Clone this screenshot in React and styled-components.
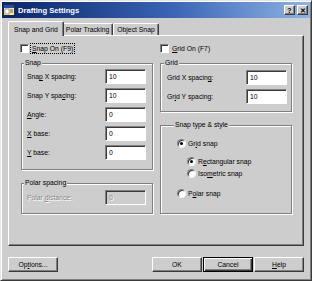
import React from 'react';
import styled, { createGlobalStyle } from 'styled-components';

const FACE = '#cdcdcd';
const FONT = '"Liberation Sans", Arial, sans-serif';

const GlobalStyle = createGlobalStyle`
  html, body { margin: 0; padding: 0; background: ${FACE}; }
  body { width: 312px; height: 281px; overflow: hidden; font-family: ${FONT}; }
  *, *::before, *::after { box-sizing: border-box; }
`;

const Window = styled.div`
  width: 312px;
  height: 281px;
  background: ${FACE};
  border: 1px solid;
  border-color: #e6e6e6 #3a3a3a #3a3a3a #e6e6e6;
  box-shadow: inset 1px 1px #fff, inset -1px -1px #808080;
  padding: 1px;
  display: flex;
  flex-direction: column;
  font-size: 6.8px;
  color: #000;
`;

const TitleBar = styled.div`
  height: 16px;
  display: flex;
  align-items: center;
  padding: 0 2px 0 1px;
  background: linear-gradient(to right, #0a246a 0%, #3a64b4 55%, #8fb3e4 100%);
`;

const TitleText = styled.span`
  margin-left: 3px;
  flex: 1;
  color: #fff;
  font-weight: bold;
  font-size: 7.6px;
  letter-spacing: 0;
`;

const CaptionButton = styled.div`
  width: 11px;
  height: 10px;
  margin-left: ${p => p.$gap || 0}px;
  background: ${FACE};
  border: 1px solid;
  border-color: #fff #3a3a3a #3a3a3a #fff;
  box-shadow: inset -1px -1px #808080;
  display: flex;
  align-items: center;
  justify-content: center;
  font-weight: bold;
  font-size: 7px;
  line-height: 1;
  color: #000;
`;

const Body = styled.div`
  flex: 1;
  display: flex;
  flex-direction: column;
  padding: 3px 6px 0 6px;
`;

const TabStrip = styled.div`
  display: flex;
  align-items: flex-end;
  height: 14px;
  padding-left: 2px;
  position: relative;
  z-index: 1;
`;

const Tab = styled.div`
  height: ${p => (p.$active ? 15 : 12)}px;
  margin: 0 ${p => (p.$active ? -2 : 0)}px ${p => (p.$active ? -1 : 0)}px;
  padding: 0 ${p => (p.$active ? 5 : 3)}px;
  display: flex;
  align-items: center;
  background: ${FACE};
  border-top: 1px solid #fff;
  border-left: 1px solid #fff;
  border-right: 1px solid #3a3a3a;
  border-radius: 2px 2px 0 0;
  box-shadow: inset -1px 0 #808080;
  white-space: nowrap;
  position: relative;
  z-index: ${p => (p.$active ? 2 : 0)};
`;

const Panel = styled.div`
  height: 211px;
  border: 1px solid;
  border-color: #fff #3a3a3a #3a3a3a #fff;
  box-shadow: inset -1px -1px #808080;
  padding: 7px 10px 0 11px;
  display: grid;
  grid-template-columns: 133px 132px;
  column-gap: 7px;
  align-items: start;
`;

const Column = styled.div`
  display: flex;
  flex-direction: column;
`;

const CheckRow = styled.div`
  display: flex;
  align-items: center;
  height: 10px;
  gap: 2px;
  white-space: nowrap;
`;

const CheckBox = styled.span`
  width: 9px;
  height: 9px;
  flex: none;
  background: #fff;
  border: 1px solid;
  border-color: #808080 #fff #fff #808080;
  box-shadow: inset 1px 1px #3a3a3a;
`;

const CheckLabel = styled.span`
  padding: 0 1px;
  outline: ${p => (p.$focus ? '1px dotted #000' : 'none')};
  line-height: 9px;
`;

const Group = styled.fieldset`
  margin: ${p => p.$mt}px 0 0 ${p => p.$ml || 0}px;
  padding: ${p => p.$pad};
  border: 1px solid #808080;
  box-shadow: 1px 1px 0 #fff, inset 1px 1px 0 #fff;
  min-width: 0;
  display: flex;
  flex-direction: column;
`;

const Legend = styled.legend`
  margin-left: -3px;
  padding: 0 1px;
  line-height: 8px;
  background: ${FACE};
`;

const FieldRow = styled.div`
  display: flex;
  align-items: center;
  justify-content: space-between;
  height: 15px;
  & + & { margin-top: 4px; }
`;

const FieldLabel = styled.span`
  color: ${p => (p.$disabled ? '#8a8a8a' : '#000')};
  text-shadow: ${p => (p.$disabled ? '1px 1px 0 #fff' : 'none')};
  white-space: nowrap;
`;

const TextInput = styled.div`
  width: 41px;
  height: 15px;
  background: ${p => (p.$disabled ? FACE : '#fff')};
  border: 1px solid;
  border-color: #808080 #fff #fff #808080;
  box-shadow: inset 1px 1px #3a3a3a;
  color: ${p => (p.$disabled ? '#8a8a8a' : '#000')};
  text-shadow: ${p => (p.$disabled ? '1px 1px 0 #fff' : 'none')};
  padding: 0 0 0 3px;
  display: flex;
  align-items: center;
`;

const RadioRow = styled.div`
  display: flex;
  align-items: center;
  gap: 2px;
  height: 10px;
  margin-top: ${p => p.$mt || 0}px;
  margin-left: ${p => p.$indent || 0}px;
  white-space: nowrap;
`;

const RadioCircle = styled.span`
  width: 9px;
  height: 9px;
  flex: none;
  border-radius: 50%;
  background: #fff;
  border: 1px solid;
  border-color: #808080 #f4f4f4 #f4f4f4 #808080;
  box-shadow: inset 1px 1px #3a3a3a;
  display: flex;
  align-items: center;
  justify-content: center;
  &::after {
    content: '';
    width: 3px;
    height: 3px;
    border-radius: 50%;
    background: ${p => (p.$on ? '#000' : 'transparent')};
  }
`;

const ButtonRow = styled.div`
  display: flex;
  margin-top: 11px;
  height: 15px;
`;

const Spacer = styled.div`
  flex: 1;
`;

const Button = styled.div`
  width: 50px;
  height: 15px;
  margin-left: ${p => p.$ml || 0}px;
  background: ${FACE};
  border: 1px solid;
  border-color: ${p => (p.$default ? '#000' : '#fff #3a3a3a #3a3a3a #fff')};
  box-shadow: ${p => (p.$default
    ? 'inset 1px 1px #fff, inset -1px -1px #3a3a3a, inset -2px -2px #808080'
    : 'inset -1px -1px #808080')};
  display: flex;
  align-items: center;
  justify-content: center;
  white-space: nowrap;
`;

const U = styled.span`
  text-decoration: underline;
  text-underline-offset: 1px;
`;

function AppIcon() {
  return (
    <svg width="12" height="12" viewBox="0 0 12 12">
      <rect x="0.5" y="0.5" width="11" height="11" fill="#f4e9b8" stroke="#2a2a2a" />
      <rect x="1" y="1" width="10" height="3" fill="#1f4fb4" />
      <rect x="2" y="5" width="4" height="5" fill="#fff" stroke="#6b6b6b" strokeWidth="0.6" />
      <line x1="7" y1="6" x2="10" y2="6" stroke="#c03a2a" strokeWidth="1" />
      <line x1="7" y1="8" x2="10" y2="8" stroke="#2d8a3a" strokeWidth="1" />
    </svg>
  );
}

export default function App() {
  return (
    <>
      <GlobalStyle />
      <Window>
        <TitleBar>
          <AppIcon />
          <TitleText>Drafting Settings</TitleText>
          <CaptionButton>?</CaptionButton>
          <CaptionButton $gap={2}>✕</CaptionButton>
        </TitleBar>
        <Body>
          <TabStrip>
            <Tab $active>Snap and Grid</Tab>
            <Tab>Polar Tracking</Tab>
            <Tab>Object Snap</Tab>
          </TabStrip>
          <Panel>
            <Column>
              <CheckRow>
                <CheckBox />
                <CheckLabel $focus><U>S</U>nap On (F9)</CheckLabel>
              </CheckRow>
              <Group $mt={6} $ml={1} $pad="2px 6px 9px 5px">
                <Legend>Snap</Legend>
                <FieldRow>
                  <FieldLabel>Sna<U>p</U> X spacing:</FieldLabel>
                  <TextInput>10</TextInput>
                </FieldRow>
                <FieldRow>
                  <FieldLabel>Snap Y spa<U>c</U>ing:</FieldLabel>
                  <TextInput>10</TextInput>
                </FieldRow>
                <FieldRow>
                  <FieldLabel><U>A</U>ngle:</FieldLabel>
                  <TextInput>0</TextInput>
                </FieldRow>
                <FieldRow>
                  <FieldLabel><U>X</U> base:</FieldLabel>
                  <TextInput>0</TextInput>
                </FieldRow>
                <FieldRow>
                  <FieldLabel><U>Y</U> base:</FieldLabel>
                  <TextInput>0</TextInput>
                </FieldRow>
              </Group>
              <Group $mt={9} $ml={1} $pad="3px 6px 8px 5px">
                <Legend>Polar spacing</Legend>
                <FieldRow>
                  <FieldLabel $disabled>Polar <U>d</U>istance:</FieldLabel>
                  <TextInput $disabled>0</TextInput>
                </FieldRow>
              </Group>
            </Column>
            <Column>
              <CheckRow>
                <CheckBox />
                <CheckLabel><U>G</U>rid On (F7)</CheckLabel>
              </CheckRow>
              <Group $mt={6} $pad="3px 4px 7px 6px">
                <Legend>Grid</Legend>
                <FieldRow>
                  <FieldLabel>Grid X spacin<U>g</U>:</FieldLabel>
                  <TextInput>10</TextInput>
                </FieldRow>
                <FieldRow>
                  <FieldLabel>Gr<U>i</U>d Y spacing:</FieldLabel>
                  <TextInput>10</TextInput>
                </FieldRow>
              </Group>
              <Group $mt={9} $pad="9px 4px 15px 16px">
                <Legend>Snap type &amp; style</Legend>
                <RadioRow>
                  <RadioCircle $on />
                  <span>Gr<U>i</U>d snap</span>
                </RadioRow>
                <RadioRow $mt={8} $indent={10}>
                  <RadioCircle $on />
                  <span>R<U>e</U>ctangular snap</span>
                </RadioRow>
                <RadioRow $mt={2} $indent={10}>
                  <RadioCircle />
                  <span>Iso<U>m</U>etric snap</span>
                </RadioRow>
                <RadioRow $mt={10}>
                  <RadioCircle />
                  <span>P<U>o</U>lar snap</span>
                </RadioRow>
              </Group>
            </Column>
          </Panel>
          <ButtonRow>
            <Button>Op<U>t</U>ions...</Button>
            <Spacer />
            <Button>OK</Button>
            <Button $ml={1} $default>Cancel</Button>
            <Button $ml={1}><U>H</U>elp</Button>
          </ButtonRow>
        </Body>
      </Window>
    </>
  );
}
